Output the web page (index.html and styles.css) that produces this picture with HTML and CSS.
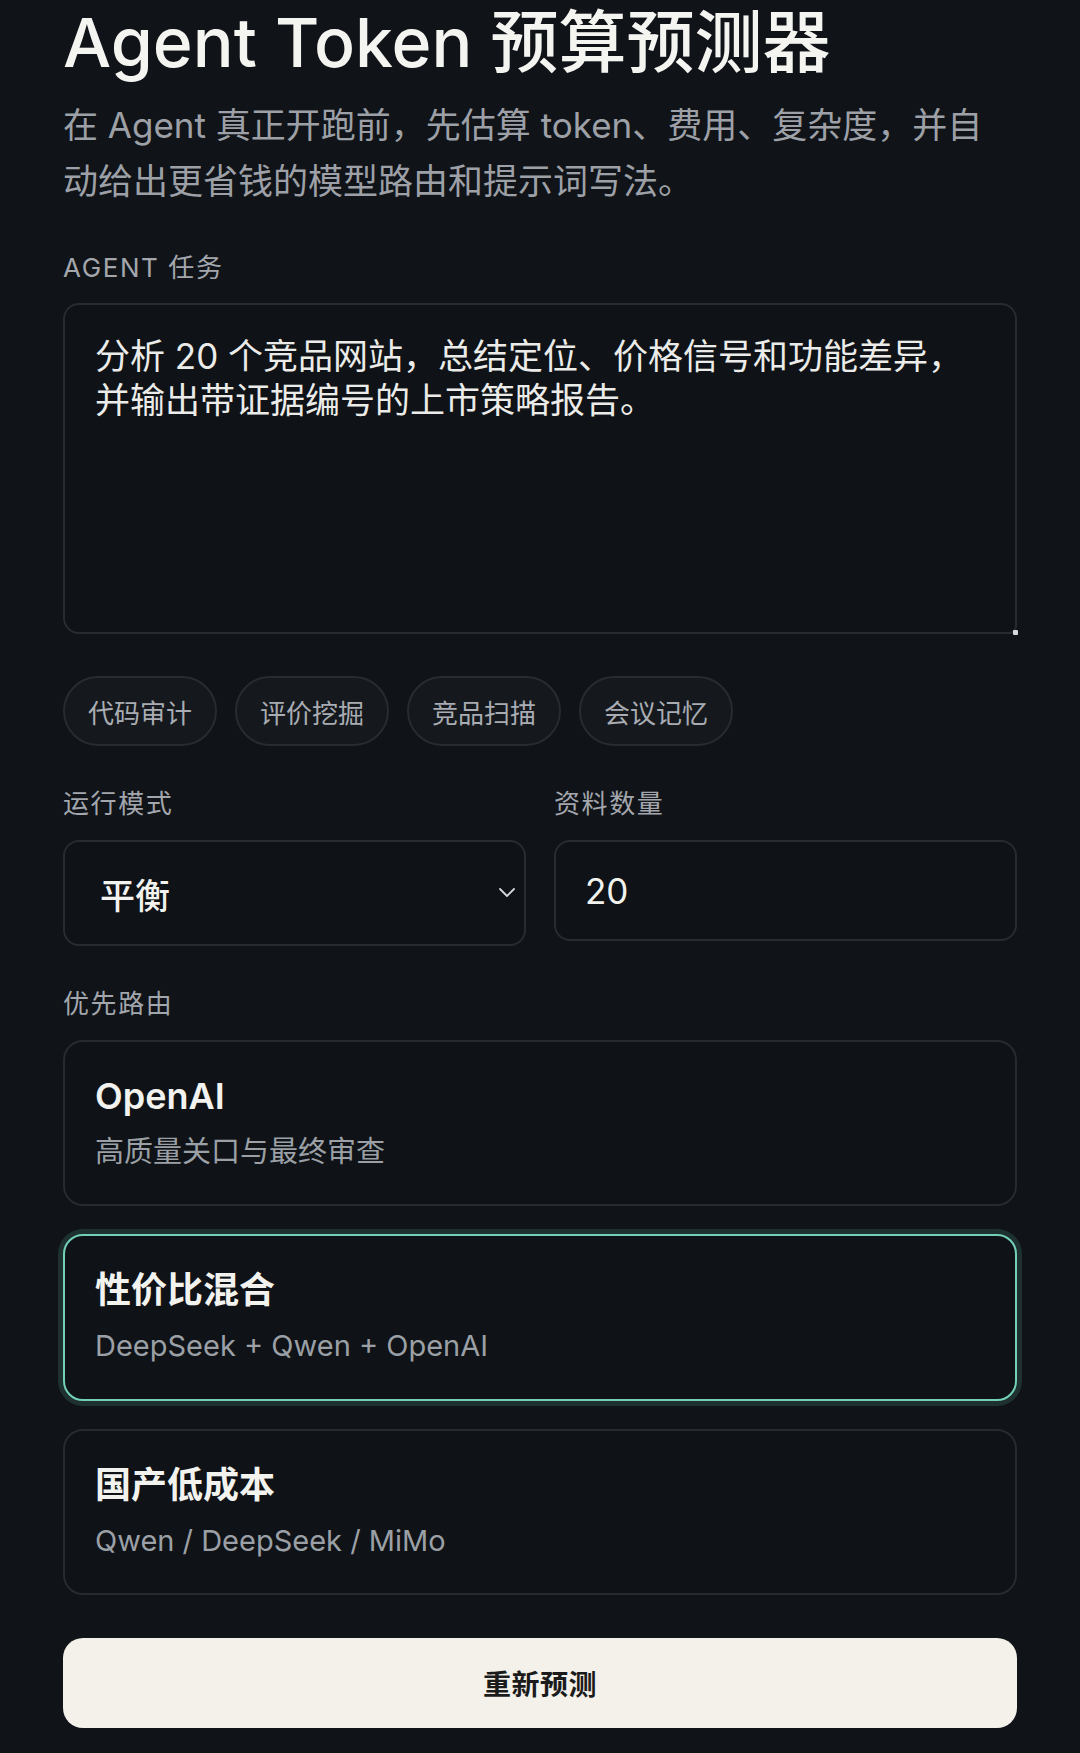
FILE: index.html
```html
<!DOCTYPE html>
<html lang="zh-CN">
<head>
<meta charset="utf-8">
<title>Agent Token 预算预测器</title>
<link rel="stylesheet" href="styles.css">
</head>
<body>
<main class="page">
  <h1 class="title">Agent Token 预算预测器</h1>
  <p class="subtitle">在 Agent 真正开跑前，先估算 token、费用、复杂度，并自动给出更省钱的模型路由和提示词写法。</p>

  <div class="label label-caps">AGENT 任务</div>
  <div class="task">
    <div class="task-text">分析 20 个竞品网站，总结定位、价格信号和功能差异，并输出带证据编号的上市策略报告。</div>
    <span class="grip"></span>
  </div>

  <div class="chips">
    <span class="chip">代码审计</span>
    <span class="chip">评价挖掘</span>
    <span class="chip">竞品扫描</span>
    <span class="chip">会议记忆</span>
  </div>

  <div class="fields">
    <div class="field">
      <div class="label">运行模式</div>
      <div class="select">
        <span class="select-value">平衡</span>
        <svg class="chevron" width="18" height="12" viewBox="0 0 18 12"><polyline points="2,2 9,9 16,2" fill="none" stroke="#d4d6da" stroke-width="1.8" stroke-linecap="round" stroke-linejoin="round"/></svg>
      </div>
    </div>
    <div class="field">
      <div class="label">资料数量</div>
      <div class="input">20</div>
    </div>
  </div>

  <div class="label route-label">优先路由</div>
  <div class="cards">
    <div class="card">
      <div class="card-title">OpenAI</div>
      <div class="card-sub">高质量关口与最终审查</div>
    </div>
    <div class="card card-active">
      <div class="card-title">性价比混合</div>
      <div class="card-sub">DeepSeek + Qwen + OpenAI</div>
    </div>
    <div class="card">
      <div class="card-title">国产低成本</div>
      <div class="card-sub">Qwen / DeepSeek / MiMo</div>
    </div>
  </div>

  <button class="primary">重新预测</button>
</main>
</body>
</html>
```
FILE: styles.css
```css
* { box-sizing: border-box; }
html, body {
  margin: 0;
  padding: 0;
  background: #101318;
}
body {
  font-family: Inter, "Noto Sans CJK SC", "Noto Sans", sans-serif;
  color: #eeeeea;
  height: 1753px;
  overflow: hidden;
}
.page {
  padding: 4px 63px 0;
  display: flex;
  flex-direction: column;
}
.title {
  margin: 0;
  font-size: 68px;
  line-height: 76px;
  font-weight: 500;
  letter-spacing: 0;
  color: #f4f4f1;
  white-space: nowrap;
}
.subtitle {
  margin: 17px 0 0;
  font-size: 35px;
  line-height: 56px;
  color: #9da1a7;
}
.label {
  font-size: 26px;
  line-height: 36px;
  letter-spacing: 1.6px;
  color: #a3a7ad;
}
.label-caps {
  margin-top: 41px;
}
.task {
  position: relative;
  margin-top: 17px;
  height: 331px;
  border: 2px solid #272b32;
  border-radius: 16px 16px 8px 16px;
  background: #0f1216;
  padding: 29px 30px;
}
.task-text {
  font-size: 35px;
  line-height: 44px;
  color: #ebece9;
}
.grip {
  position: absolute;
  right: -3px;
  bottom: -3px;
  width: 5px;
  height: 5px;
  border-radius: 1px;
  background: #d8d9db;
}
.chips {
  margin-top: 42px;
  display: flex;
  gap: 18px;
}
.chip {
  height: 70px;
  padding: 0 23px;
  display: flex;
  align-items: center;
  border: 2px solid #272b32;
  border-radius: 35px;
  background: #15181d;
  font-size: 26px;
  color: #a9adb3;
}
.fields {
  margin-top: 40px;
  display: grid;
  grid-template-columns: 1fr 1fr;
  column-gap: 28px;
  align-items: start;
}
.field {
  display: flex;
  flex-direction: column;
  gap: 18px;
}
.select, .input {
  border: 2px solid #272b32;
  border-radius: 16px;
  background: #0f1216;
  display: flex;
  align-items: center;
  font-size: 35px;
  font-weight: 500;
  color: #f2f2ef;
}
.select {
  height: 106px;
  padding: 0 8px 0 35px;
  justify-content: space-between;
}
.select-value {
  font-weight: 500;
}
.input {
  height: 101px;
  padding: 0 29px;
  font-weight: 400;
}
.chevron {
  display: block;
}
.route-label {
  margin-top: 40px;
}
.cards {
  margin-top: 18px;
  display: flex;
  flex-direction: column;
  gap: 28px;
}
.card {
  height: 166px;
  border: 2px solid #262a31;
  border-radius: 20px;
  background: #0f1216;
  padding: 30px 30px 0;
}
.card-active {
  height: 167px;
  border-color: #72cfb9;
  box-shadow: 0 0 0 5px rgba(92, 190, 160, 0.18);
}
.card-title {
  font-size: 36px;
  line-height: 48px;
  font-weight: 600;
  color: #f2f2ef;
}
.card-sub {
  margin-top: 12px;
  font-size: 29px;
  line-height: 40px;
  color: #9ba0a6;
}
.primary {
  margin-top: 43px;
  height: 90px;
  width: 100%;
  border: none;
  border-radius: 20px;
  background: #f3f1ea;
  font-family: Inter, "Noto Sans CJK SC", sans-serif;
  font-size: 28px;
  font-weight: 700;
  color: #1b1b1b;
  letter-spacing: 0.5px;
}
```
